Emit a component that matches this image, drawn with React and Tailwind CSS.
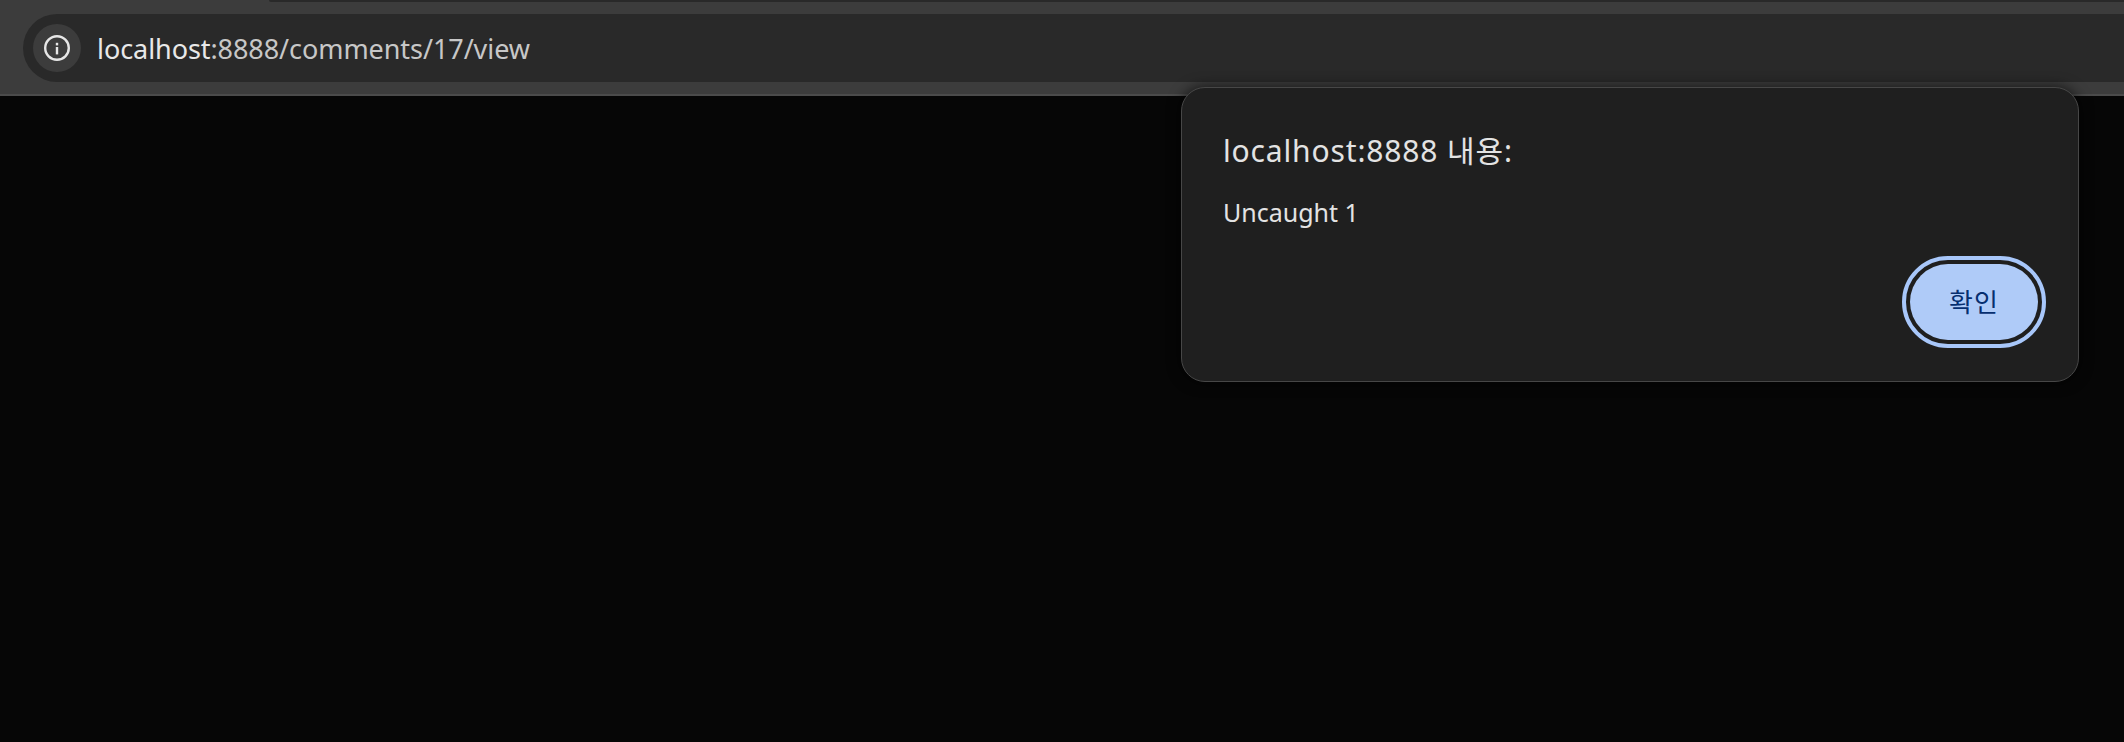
import React from 'react'

const uiFont = '[font-family:"Noto_Sans","Noto_Sans_CJK_KR",sans-serif]'

function InfoIcon() {
  return (
    <svg width="26" height="26" viewBox="0 0 26 26" fill="none">
      <circle cx="13" cy="13" r="11.8" stroke="#e6e6e6" strokeWidth="2.4" />
      <rect x="11.8" y="12" width="2.4" height="7.4" fill="#e6e6e6" />
      <rect x="11.8" y="7.8" width="2.4" height="2.6" fill="#e6e6e6" />
    </svg>
  )
}

function Toolbar() {
  return (
    <div className="h-[96px] shrink-0 flex flex-col bg-[#3c3c3c] border-b-2 border-[#4b4b4b]">
      {/* tab strip edge */}
      <div className="h-[2px] ml-[269px] bg-[#292929] rounded-bl-[2px]" />
      <div className="mt-[12px] ml-[23px] h-[68px] flex items-center bg-[#292929] rounded-l-[34px] pl-[10px]">
        <div className="w-[48px] h-[48px] rounded-full bg-[#3c3c3c] flex items-center justify-center">
          <InfoIcon />
        </div>
        <div className="ml-[16px] text-[27px] leading-none tracking-[-0.07px] text-[#c7c7c7]">
          <span className="text-[#e8e8e8]">localhost</span>:8888/comments/17/view
        </div>
      </div>
    </div>
  )
}

function AlertDialog() {
  return (
    <div className="absolute left-[1181px] top-[87px] w-[898px] h-[295px] bg-[#1f1f1f] border border-[#474747] rounded-[24px] pl-[41px] pr-[40px] pt-[43px] flex flex-col shadow-[0_0_14px_rgba(0,0,0,0.7)]">
      <div className="text-[30px] leading-[40px] tracking-[0.85px] text-[#e3e3e3]">localhost:8888 내용:</div>
      <div className="mt-[25px] text-[25px] leading-[32px] text-[#e3e3e3]">Uncaught 1</div>
      <div className="mt-[36px] flex justify-end">
        <button className="w-[128px] h-[76px] rounded-full bg-[#afcbf8] text-[#062e6f] text-[26px] tracking-[1px] outline-4 outline-offset-4 outline-[#a8c7fa]">
          확인
        </button>
      </div>
    </div>
  )
}

export default function App() {
  return (
    <div className={`relative w-[2124px] h-[742px] overflow-hidden bg-[#060606] flex flex-col ${uiFont}`}>
      <Toolbar />
      <AlertDialog />
    </div>
  )
}
